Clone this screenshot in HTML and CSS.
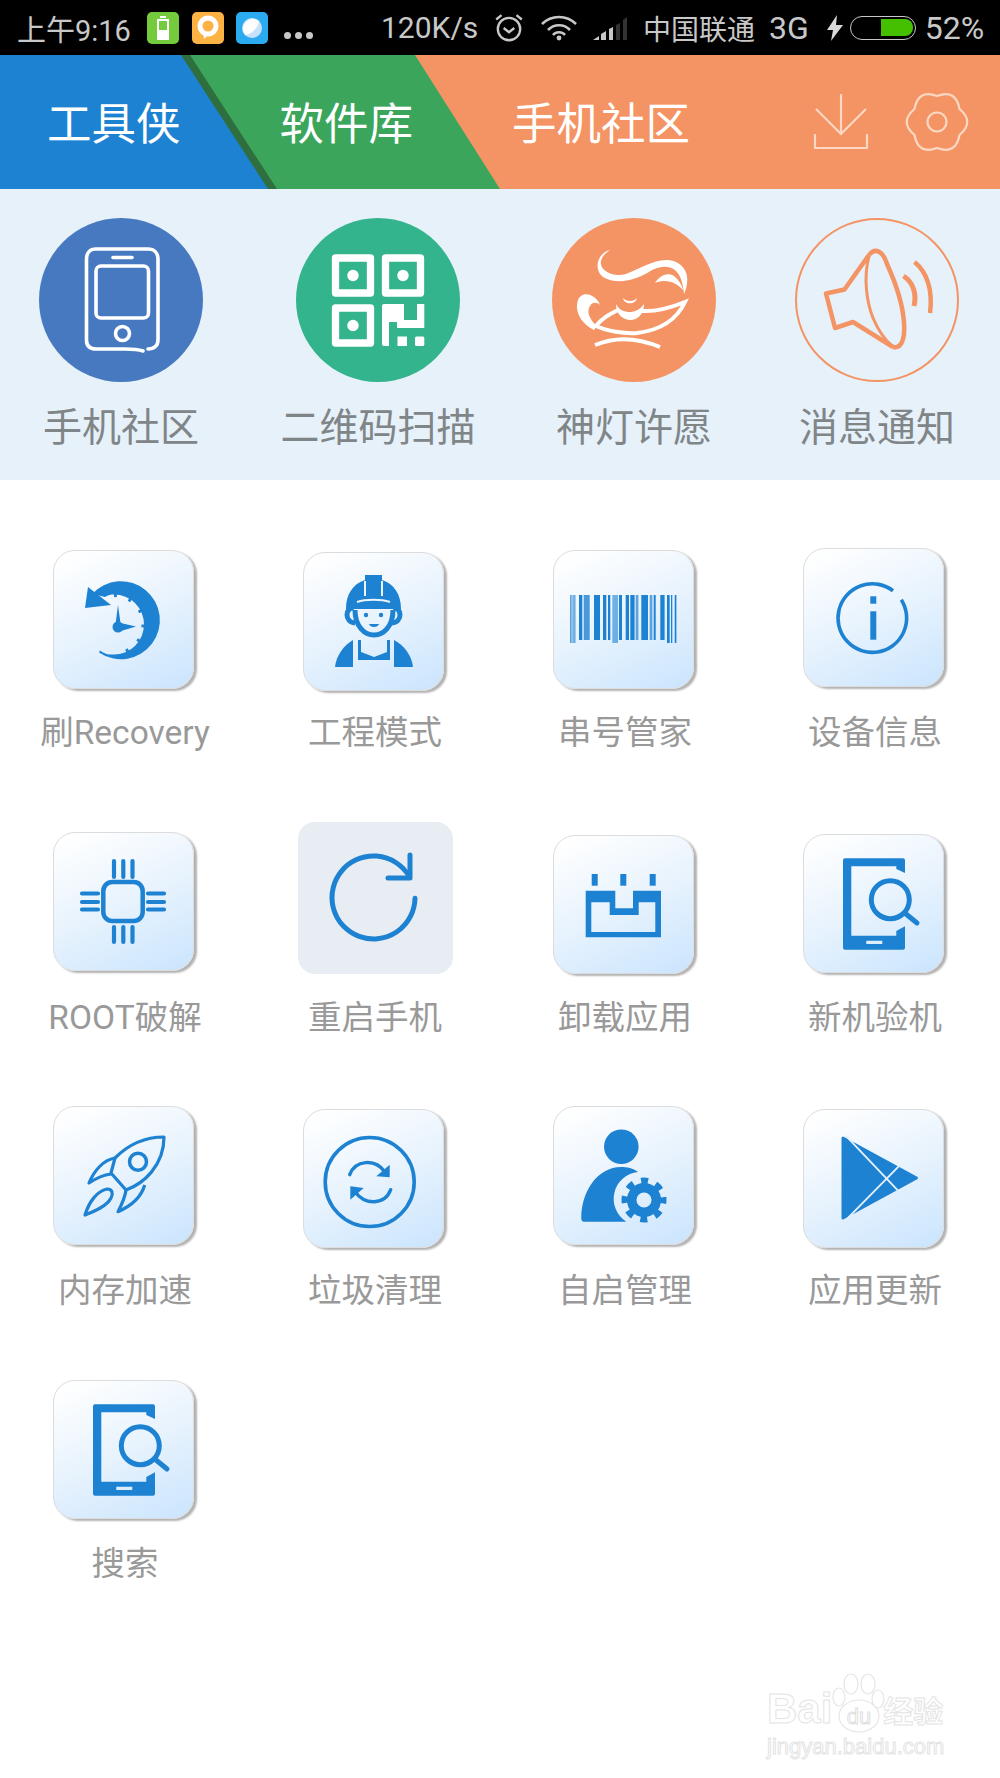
FILE: index.html
```html
<!DOCTYPE html>
<html lang="zh-CN">
<head>
    <meta charset="UTF-8">
    <meta name="viewport" content="width=device-width, initial-scale=1.0">
    <title>工具侠</title>
    <link rel="stylesheet" href="styles.css">
</head>
<body>
<div class="page">

    <!-- status bar -->
    <div class="status">
        <span class="st-time">上午9:16</span>
        <span class="app app-green">
            <svg width="32" height="32" viewBox="0 0 32 32"><path d="M13 5h6M11 8h10v19H11z" fill="none" stroke="#fff" stroke-width="2"/><rect x="12" y="18" width="8" height="8" fill="#fff"/></svg>
        </span>
        <span class="app app-orange">
            <svg width="32" height="32" viewBox="0 0 32 32"><circle cx="16" cy="14" r="8" fill="none" stroke="#fff" stroke-width="5"/><path d="M11 19l1 8 6-6z" fill="#fff"/></svg>
        </span>
        <span class="app app-blue">
            <svg width="32" height="32" viewBox="0 0 32 32"><circle cx="16" cy="16" r="10" fill="#c6e2fa"/><path d="M9 23A10 10 0 0 1 23 9c-1 7-7 13-14 14z" fill="#fff"/></svg>
        </span>
        <span class="st-dots"><i></i><i></i><i></i></span>

        <span class="st-speed">120K/s</span>
        <svg class="st-alarm" width="32" height="32" viewBox="0 0 30 30" fill="none" stroke="#c8c8c8" stroke-width="2.2"><circle cx="15" cy="16" r="10.5"/><path d="M3 7l5-4M27 7l-5-4M10 15l5 4 5-4"/></svg>
        <svg class="st-wifi" width="36" height="26" viewBox="0 0 36 26" fill="none" stroke="#c8c8c8" stroke-width="2.6"><path d="M1 9a24 24 0 0 1 34 0M7 15a15 15 0 0 1 22 0M12 20a8 8 0 0 1 12 0"/><circle cx="18" cy="23" r="2.4" fill="#c8c8c8" stroke="none"/></svg>
        <svg class="st-signal" width="36" height="24" viewBox="0 0 36 24"><path d="M1 24l6-4v4z M9 24v-6l5-3v9z M17 24V13l4-2v13z" fill="#c8c8c8"/><path d="M24 24V9l4-2v17z M31 24V4l4-3v23z" fill="#333"/></svg>
        <span class="st-carrier">中国联通</span>
        <span class="st-net">3G</span>
        <svg class="st-bolt" width="16" height="26" viewBox="0 0 16 26"><path d="M10 0L0 15h6l-2 11 12-16H9z" fill="#d8d8d8"/></svg>
        <span class="battery"><span class="battery-fill"></span></span>
        <span class="st-pct">52%</span>
    </div>

    <!-- header -->
    <div class="header">
        <svg class="header-bg" width="1000" height="134" viewBox="0 0 1000 134">
            <rect width="1000" height="134" fill="#f49464"/>
            <polygon points="0,0 415,0 500,134 0,134" fill="#3ca55c"/>
            <polygon points="0,0 190,0 277,134 0,134" fill="#2f6f3f"/>
            <polygon points="0,0 181,0 268,134 0,134" fill="#1e82d2"/>
        </svg>
        <span class="tab">工具侠</span>
        <span class="tab">软件库</span>
        <span class="tab">手机社区</span>
        <div class="header-tools">
            <svg width="56" height="58" viewBox="0 0 56 58" fill="none" stroke="#fbd8c4" stroke-width="2.2"><path d="M28 1v40M3 16l25 25 25-25M2 41v14h52V41"/></svg>
            <svg width="70" height="70" viewBox="0 0 70 70" fill="none" stroke="#fbd8c4" stroke-width="2.2" stroke-linejoin="round"><g transform="translate(35 35)"><path d="M22.5 -13Q38 0 22.5 13Q19 33 0 26Q-19 33 -22.5 13Q-38 0 -22.5 -13Q-19 -33 0 -26Q19 -33 22.5 -13Z"/><circle r="9.5"/></g></svg>
        </div>
    </div>

    <!-- quick entries -->
    <div class="quick">
        <div class="quick-item">
            <div class="ring ring-blue">
                <svg width="164" height="164" viewBox="0 0 164 164" fill="none" stroke="#fff" stroke-width="3.6" stroke-linecap="round">
                    <path d="M109 131C115 131 119 128 119 122V41C119 35 115 31 109 31H57C51 31 47.5 35 47.5 41V122C47.5 128 51 131 57 131H86C92 131 98 131 104 133"/>
                    <path d="M74 39.5H93"/>
                    <rect x="57" y="48" width="52.5" height="52" rx="5"/>
                    <circle cx="83.5" cy="115.5" r="7"/>
                </svg>
            </div>
            <span class="quick-name">手机社区</span>
        </div>
        <div class="quick-item">
            <div class="ring ring-green">
                <svg width="164" height="164" viewBox="0 0 164 164" fill="#fff">
                    <g fill="none" stroke="#fff" stroke-width="7.3" stroke-linejoin="round">
                        <rect x="39.5" y="40" width="35" height="35"/>
                        <rect x="89.5" y="40" width="35" height="35"/>
                        <rect x="39.5" y="90" width="35" height="35"/>
                    </g>
                    <circle cx="57" cy="57.5" r="5.7"/>
                    <circle cx="107" cy="57.5" r="5.7"/>
                    <circle cx="57" cy="107.5" r="5.7"/>
                    <path d="M88 86H108V102H121V86H128.3V110H101V104H93V128H88A2 2 0 0 1 86 126V88A2 2 0 0 1 88 86Z"/>
                    <rect x="101.5" y="118.5" width="9.5" height="9.5"/>
                    <rect x="119" y="118.5" width="9.3" height="9.5" rx="1.5"/>
                </svg>
            </div>
            <span class="quick-name">二维码扫描</span>
        </div>
        <div class="quick-item">
            <div class="ring ring-orange">
                <svg width="164" height="164" viewBox="0 0 164 164" fill="#fff">
                    <path d="M58 32C43 36 41 56 55 61C70 67 88 60 100 52C108 48 118 47 124 53C129 58 131 66 132 76C138 62 136 50 124 44C108 37 90 50 74 56C60 60 47 52 49 43C50 38 54 35 58 32Z"/>
                    <path d="M103 65C108 57 116 54 122 58C127 62 130 67 131 72C125 65 115 60 103 65Z"/>
                    <path d="M48 87C44 76 30 72 26 82C22 94 30 106 42 112L45 108C38 102 34 94 38 88C40 84 45 84 48 87Z"/>
                    <path d="M64 86C64 97 72 102 78 102C86 102 92 96 92 86C88 92 82 94 78 94C72 94 67 92 64 86Z"/>
                    <path d="M71 80C72 87 84 87 85 80C82 84 74 84 71 80Z"/>
                    <g fill="none" stroke="#fff" stroke-width="4">
                        <path d="M43 109C50 100 58 96 66 92"/>
                        <path d="M90 93C105 94 118 90 133 84C125 101 110 112 85 115C72 116 55 113 44 108"/>
                        <path d="M43 127C62 119 84 119 108 129"/>
                    </g>
                </svg>
            </div>
            <span class="quick-name">神灯许愿</span>
        </div>
        <div class="quick-item">
            <div class="ring ring-line">
                <svg width="164" height="164" viewBox="0 0 164 164" fill="none" stroke="#f49464" stroke-width="4.5" stroke-linejoin="round">
                    <path d="M74 37L49.5 71.5L31 75.5L40 110L58 104L98 129"/>
                    <path d="M74 37C80 29 88 33 92 46C102 68 108 88 109 105C110 120 107 131 98 129"/>
                    <path d="M74 38C68 60 72 85 78 100C83 112 90 122 98 129" stroke-width="3"/>
                    <path d="M108.5 58C118 64 122 76 119 88" stroke-width="5"/>
                    <path d="M119.5 44C132 54 138 72 135 95" stroke-width="4.5"/>
                </svg>
            </div>
            <span class="quick-name">消息通知</span>
        </div>
    </div>

    <!-- tool grid -->
    <div class="tools">
        <div class="cell">
            <div class="slot"><div class="tile drop-10">
                <svg width="140" height="139" viewBox="0 0 140 139" fill="#1e82d2">
                    <path d="M39 44A39 39 0 1 1 46 102.5L47 100.5C52 104 56 105 61 104.5A30 30 0 0 0 61 44.5C58 44.5 55 45 52 47Z"/>
                    <polygon points="35,37 32,58 58,55"/>
                    <path d="M61 44.5A30 30 0 0 1 61 104.5" fill="none" stroke="#1e82d2" stroke-width="5" stroke-dasharray="3 12.7"/>
                    <circle cx="65" cy="77" r="5.5"/>
                    <polygon points="65,55 67.5,73 83,76.5 68,81 62.5,74"/>
                </svg>
            </div></div>
            <span class="tool-name">刷Recovery</span>
        </div>
        <div class="cell">
            <div class="slot"><div class="tile drop-12">
                <svg width="140" height="139" viewBox="0 0 140 139" fill="#1e82d2">
                    <path d="M43 57C43 42 50 32 62 28V23H79V28C91 32 98 42 98 57Z"/>
                    <path d="M62 29V44M79 29V44M54 50C63 47 78 47 87 50" fill="none" stroke="#eaf4fd" stroke-width="2"/>
                    <path d="M52 58C52 75 62 83 71 83C80 83 90 75 90 58" fill="none" stroke="#1e82d2" stroke-width="5"/>
                    <path d="M51 56C42 55 41 70 52 71M90 56C99 55 100 70 89 71" fill="none" stroke="#1e82d2" stroke-width="5"/>
                    <circle cx="63" cy="63" r="2.2"/>
                    <circle cx="78" cy="63" r="2.2"/>
                    <path d="M66 72H76C75 76 67 76 66 72Z"/>
                    <path d="M32 115C33 104 41 93 50 88V115Z"/>
                    <path d="M110 115C109 104 101 93 91 88V115Z"/>
                    <polygon points="55,88 58,88 58,100 71,105 84,100 84,88 87,88 87,108 55,108"/>
                </svg>
            </div></div>
            <span class="tool-name">工程模式</span>
        </div>
        <div class="cell">
            <div class="slot"><div class="tile drop-10">
                <svg width="140" height="139" viewBox="0 0 140 139" fill="#1e82d2">
                    <rect x="17.3" y="45" width="1.2" height="48"/>
                    <rect x="19.3" y="45" width="3.3" height="48" opacity=".6"/>
                    <rect x="26" y="45" width="3.3" height="45"/>
                    <rect x="30.7" y="45" width="6" height="45" opacity=".8"/>
                    <rect x="41" y="45" width="6" height="45"/>
                    <rect x="50" y="45" width="3.3" height="45"/>
                    <rect x="55" y="45" width="2.3" height="45"/>
                    <rect x="59.3" y="45" width="5.7" height="48" opacity=".6"/>
                    <rect x="66" y="45" width="3" height="45"/>
                    <rect x="72.7" y="45" width="3.3" height="45"/>
                    <rect x="77.3" y="45" width="4.3" height="45"/>
                    <rect x="82.7" y="45" width="2.7" height="45" opacity=".7"/>
                    <rect x="88.3" y="45" width="6.7" height="45"/>
                    <rect x="96.7" y="45" width="2.7" height="45" opacity=".7"/>
                    <rect x="100.7" y="45" width="2" height="45"/>
                    <rect x="107.3" y="45" width="4.3" height="45"/>
                    <rect x="114" y="45" width="2.7" height="48"/>
                    <rect x="118" y="45" width="1.3" height="48"/>
                    <rect x="121.7" y="45" width="1.7" height="48"/>
                </svg>
            </div></div>
            <span class="tool-name">串号管家</span>
        </div>
        <div class="cell">
            <div class="slot"><div class="tile drop-8">
                <svg width="140" height="139" viewBox="0 0 140 139" fill="#1e82d2">
                    <path d="M98.3 51.7A34.3 34.3 0 1 1 90 42.7" fill="none" stroke="#1e82d2" stroke-width="3.6"/>
                    <rect x="67.3" y="48.3" width="6" height="7.4"/>
                    <rect x="67.3" y="63.3" width="6" height="28.4"/>
                </svg>
            </div></div>
            <span class="tool-name">设备信息</span>
        </div>

        <div class="cell">
            <div class="slot"><div class="tile drop-7">
                <svg width="140" height="139" viewBox="0 0 140 139" fill="#1e82d2">
                    <rect x="50.3" y="50" width="39.4" height="39" rx="9" fill="none" stroke="#1e82d2" stroke-width="4.5"/>
                    <g stroke="#1e82d2" stroke-width="4.2" stroke-linecap="round">
                        <path d="M61 29V45M70.3 29V45M79.5 29V45"/>
                        <path d="M61 95V110M70.3 95V110M79.5 95V110"/>
                        <path d="M29 61.5H45M29 70H45M29 77.5H45"/>
                        <path d="M95 61.5H111M95 70H111M95 77.5H111"/>
                    </g>
                </svg>
            </div></div>
            <span class="tool-name">ROOT破解</span>
        </div>
        <div class="cell">
            <div class="slot"><div class="tile-on">
                <svg width="155" height="152" viewBox="0 0 155 152" fill="none" stroke="#1e82d2" stroke-width="5" stroke-linecap="round" stroke-linejoin="round">
                    <path d="M117 76.3A41.5 41.5 0 1 1 111 54"/>
                    <path d="M112 33V56H90"/>
                </svg>
            </div></div>
            <span class="tool-name">重启手机</span>
        </div>
        <div class="cell">
            <div class="slot"><div class="tile drop-10">
                <svg width="140" height="139" viewBox="0 0 140 139" fill="#1e82d2">
                    <rect x="38.7" y="39" width="6" height="11.7"/>
                    <rect x="67.3" y="39" width="6" height="11.7"/>
                    <rect x="96.7" y="39" width="6" height="11.7"/>
                    <path fill-rule="evenodd" d="M32.7 55.7H62.3V73.3H80V55.7H108V102.3H32.7ZM38.3 67.3V97H102.3V67.3H85.7V80H56.7V67.3Z"/>
                </svg>
            </div></div>
            <span class="tool-name">卸载应用</span>
        </div>
        <div class="cell">
            <div class="slot"><div class="tile drop-9">
                <svg width="140" height="139" viewBox="0 0 140 139" fill="#1e82d2">
                    <path d="M42 24.3H100A2 2 0 0 1 102 26.3V39L93.3 35V32.3H48.3V101.7H93.3V97L102 92.3V113.7A2 2 0 0 1 100 115.7H42A2 2 0 0 1 40 113.7V26.3A2 2 0 0 1 42 24.3ZM63.3 106.7V110H79.3V106.7Z" fill-rule="evenodd"/>
                    <circle cx="87.3" cy="65.7" r="19" fill="none" stroke="#1e82d2" stroke-width="5"/>
                    <path d="M103 80L114 89" stroke="#1e82d2" stroke-width="5" stroke-linecap="round"/>
                </svg>
            </div></div>
            <span class="tool-name">新机验机</span>
        </div>

        <div class="cell">
            <div class="slot"><div class="tile drop-8">
                <svg width="140" height="139" viewBox="0 0 140 139" fill="none" stroke="#1e82d2" stroke-width="3.2" stroke-linejoin="round">
                    <path d="M111 31C92 31 75 39 62 52L58 67L73 84C90 78 111 60 111 31Z"/>
                    <circle cx="85" cy="55.7" r="8.5" stroke-width="3.5"/>
                    <path d="M62 52C50 54 41 65 36 77C42 73 50 69 58 68"/>
                    <path d="M91.7 79C88 92 78 100 65 105.7C69 98 72 92 73 84"/>
                    <path d="M32 109C36 96 44 85 54 83C60 83 60 88 58 92C54 100 42 105 32 109Z"/>
                </svg>
            </div></div>
            <span class="tool-name">内存加速</span>
        </div>
        <div class="cell">
            <div class="slot"><div class="tile drop-11">
                <svg width="140" height="139" viewBox="0 0 140 139" fill="#1e82d2">
                    <circle cx="66.7" cy="73" r="44.5" fill="none" stroke="#1e82d2" stroke-width="3.6"/>
                    <path d="M46.7 65.7C52 51 72 49 82 63M87.7 80.7C82 96 62 97 51.7 82.3" fill="none" stroke="#1e82d2" stroke-width="3.4" stroke-linecap="round"/>
                    <polygon points="86.7,55.7 86.7,68.3 73.3,67.3"/>
                    <polygon points="47.3,90.7 47.3,77.3 60.7,79"/>
                </svg>
            </div></div>
            <span class="tool-name">垃圾清理</span>
        </div>
        <div class="cell">
            <div class="slot"><div class="tile drop-8">
                <svg width="140" height="139" viewBox="0 0 140 139" fill="#1e82d2">
                    <circle cx="68.3" cy="40.7" r="17.3"/>
                    <path d="M31 115.7A3 3 0 0 1 28.3 112.7C28 85 45 61 68 61C74 61 80 62 85 66A27 27 0 0 0 73.3 115.7Z"/>
                    <circle cx="91" cy="94" r="12.3" fill="none" stroke="#1e82d2" stroke-width="9.5"/>
                    <circle cx="91" cy="94" r="19" fill="none" stroke="#1e82d2" stroke-width="7" stroke-dasharray="7 7.92" stroke-dashoffset="3.5"/>
                </svg>
            </div></div>
            <span class="tool-name">自启管理</span>
        </div>
        <div class="cell">
            <div class="slot"><div class="tile drop-11">
                <svg width="140" height="139" viewBox="0 0 140 139" fill="#1e82d2">
                    <polygon points="40,29 113.5,69 40,109" stroke="#1e82d2" stroke-width="3" stroke-linejoin="round"/>
                    <path d="M42.7 26.7L95.7 82.3M43.3 110.7L95.7 57.3" stroke="#e4f0fb" stroke-width="1.9" fill="none"/>
                </svg>
            </div></div>
            <span class="tool-name">应用更新</span>
        </div>

        <div class="cell">
            <div class="slot"><div class="tile drop-9">
                <svg width="140" height="139" viewBox="0 0 140 139" fill="#1e82d2">
                    <path d="M42 24.3H100A2 2 0 0 1 102 26.3V39L93.3 35V32.3H48.3V101.7H93.3V97L102 92.3V113.7A2 2 0 0 1 100 115.7H42A2 2 0 0 1 40 113.7V26.3A2 2 0 0 1 42 24.3ZM63.3 106.7V110H79.3V106.7Z" fill-rule="evenodd"/>
                    <circle cx="87.3" cy="65.7" r="19" fill="none" stroke="#1e82d2" stroke-width="5"/>
                    <path d="M103 80L114 89" stroke="#1e82d2" stroke-width="5" stroke-linecap="round"/>
                </svg>
            </div></div>
            <span class="tool-name">搜索</span>
        </div>
    </div>

    <!-- watermark -->
    <div class="mark">
        <div class="mark-top">
            <span class="mark-bai">Bai</span>
            <svg class="mark-paw" width="56" height="62" viewBox="0 0 56 62" fill="#fff" stroke="#e6e6e6" stroke-width="1.2">
                <ellipse cx="19" cy="11" rx="7" ry="10"/>
                <ellipse cx="36" cy="11" rx="7" ry="10"/>
                <ellipse cx="7" cy="24" rx="6" ry="9"/>
                <ellipse cx="46" cy="26" rx="6" ry="9"/>
                <ellipse cx="27" cy="43" rx="20" ry="16"/>
                <text x="27" y="51" text-anchor="middle" class="mark-du">du</text>
            </svg>
            <span class="mark-jy">经验</span>
        </div>
        <div class="mark-url">jingyan.baidu.com</div>
    </div>
</div>
</body>
</html>
```

FILE: styles.css
```css
*{
    margin: 0;
    padding: 0;
    box-sizing: border-box;
}
body{
    background: #fff;
    font-family: Roboto, "Noto Sans CJK SC", sans-serif;
}
.page{
    position: relative;
    width: 1000px;
    height: 1778px;
    overflow: hidden;
}

/* status bar */
.status{
    display: flex;
    align-items: center;
    height: 55px;
    padding-left: 17px;
    background: #000;
    color: #c8c8c8;
    font-size: 29px;
    white-space: nowrap;
}
.st-time{
    width: 130px;
}
.app{
    display: block;
    width: 32px;
    height: 32px;
    border-radius: 5px;
}
.app svg{
    display: block;
}
.app-green{
    background: #74cb3c;
}
.app-orange{
    margin-left: 13px;
    background: #fdb244;
}
.app-blue{
    margin-left: 12px;
    background: #2caaf0;
}
.st-dots{
    display: flex;
    gap: 4px;
    margin: 16px 0 0 16px;
}
.st-dots i{
    width: 7px;
    height: 7px;
    border-radius: 50%;
    background: #c8c8c8;
}
.st-speed{
    margin-left: 68px;
    width: 95px;
    font-size: 30px;
}
.st-alarm{
    margin-left: 17px;
}
.st-wifi{
    margin-left: 16px;
}
.st-signal{
    margin-left: 15px;
}
.st-carrier{
    margin-left: 15px;
    font-size: 28px;
}
.st-net{
    margin-left: 14px;
    font-size: 32px;
}
.st-bolt{
    margin-left: 18px;
}
.battery{
    display: flex;
    justify-content: flex-end;
    width: 66px;
    height: 24px;
    margin-left: 7px;
    padding: 2px;
    border: 1.5px solid #c8c8c8;
    border-radius: 12px;
}
.battery-fill{
    width: 32px;
    height: 17px;
    border-radius: 0 8px 8px 0;
    background: #44c000;
}
.st-pct{
    margin-left: 9px;
    font-size: 32px;
}

/* header */
.header{
    position: relative;
    display: flex;
    align-items: center;
    gap: 99px;
    height: 134px;
    padding-left: 47px;
    color: #fff;
    font-size: 44.5px;
}
.header-bg{
    position: absolute;
    left: 0;
    top: 0;
}
.tab{
    position: relative;
    margin-bottom: 4px;
}
.header-tools{
    position: relative;
    display: flex;
    align-items: center;
    gap: 33px;
    margin-left: auto;
    padding-right: 28px;
}

/* quick entries */
.quick{
    display: grid;
    grid-template-columns: 242px 272px 240px 246px;
    height: 291px;
    padding-top: 29px;
    background: #e6f1fa;
}
.quick-item{
    display: flex;
    flex-direction: column;
    align-items: center;
}
.ring{
    width: 164px;
    height: 164px;
    border-radius: 50%;
}
.ring svg{
    display: block;
}
.ring-blue{
    background: #4779c0;
}
.ring-green{
    background: #34b48c;
}
.ring-orange{
    background: #f49464;
}
.ring-line{
    border: 2.5px solid #f49464;
}
.ring-line svg{
    margin: -2.5px;
}
.quick-name{
    margin-top: 19px;
    color: #808588;
    font-size: 39px;
    line-height: 54px;
}

/* tool grid */
.tools{
    display: grid;
    grid-template-columns: repeat(4, 250px);
    grid-template-rows: 285px 273px 273px 273px;
    padding-top: 60px;
}
.cell{
    display: flex;
    flex-direction: column;
    align-items: center;
}
.slot{
    display: flex;
    flex-direction: column;
    align-items: center;
    height: 171px;
}
.tile{
    width: 141px;
    height: 139px;
    margin-right: 3px;
    border: 1px solid #dcdcdc;
    border-radius: 22px;
    background: linear-gradient(155deg, #fff 5%, #e8f3fd 50%, #cde6fe 95%);
    box-shadow: 3px 2px 2px rgba(0, 0, 0, .3);
}
.tile svg{
    display: block;
    margin: -1px;
}
.drop-7{
    margin-top: 7px;
}
.drop-8{
    margin-top: 8px;
}
.drop-9{
    margin-top: 9px;
}
.drop-10{
    margin-top: 10px;
}
.drop-11{
    margin-top: 11px;
}
.drop-12{
    margin-top: 12px;
}
.tile-on{
    width: 155px;
    height: 152px;
    margin-top: -3px;
    border-radius: 17px;
    background: #e8edf4;
}
.tile-on svg{
    display: block;
}
.tool-name{
    color: #999;
    font-size: 33.5px;
    line-height: 44px;
    white-space: nowrap;
}

/* watermark */
.mark{
    position: absolute;
    left: 767px;
    top: 1691px;
    color: #fff;
    -webkit-text-stroke: 1px #e4e4e4;
    font-family: "Liberation Sans", "Noto Sans CJK SC", sans-serif;
}
.mark-top{
    display: flex;
    align-items: flex-end;
    height: 36px;
}
.mark-bai{
    font-size: 42px;
    font-weight: bold;
    line-height: 36px;
}
.mark-paw{
    margin: -18px -5px 0 0;
    align-self: flex-start;
}
.mark-du{
    font-family: "Liberation Sans", sans-serif;
    font-size: 22px;
    fill: #fff;
    stroke: #e0e0e0;
    stroke-width: 1;
}
.mark-jy{
    margin-bottom: -3px;
    font-size: 30px;
    font-weight: bold;
    line-height: 36px;
}
.mark-url{
    margin-top: 7px;
    font-size: 22px;
    line-height: 26px;
    white-space: nowrap;
}
```
